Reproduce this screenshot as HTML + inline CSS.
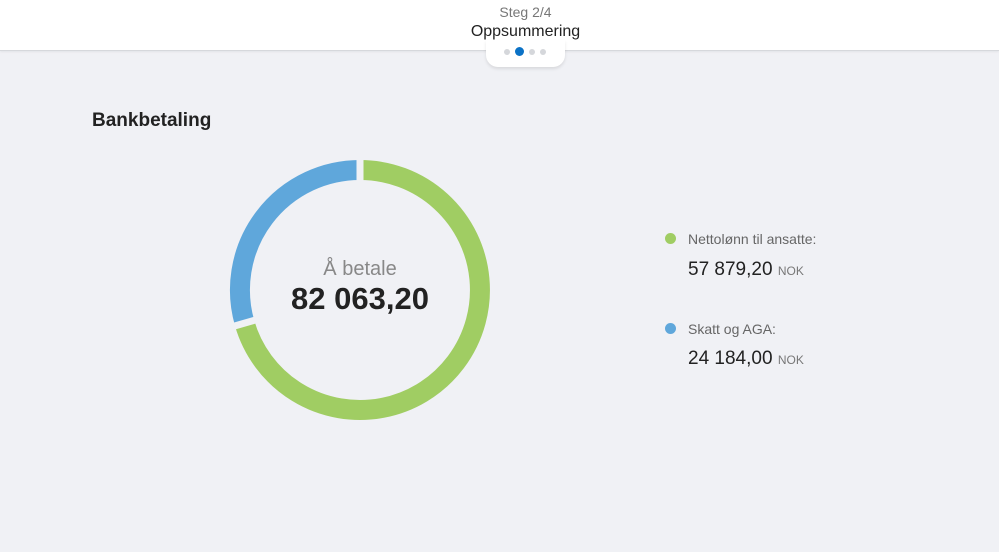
<!DOCTYPE html>
<html><head><meta charset="utf-8"><style>
body{margin:0;width:999px;height:552px;background:#f0f1f5;font-family:"Liberation Sans",sans-serif;position:relative;overflow:hidden}
.top{position:absolute;left:0;top:0;width:999px;height:50px;background:#fff;border-bottom:1px solid #d6d8dc;box-shadow:0 1px 2px rgba(0,0,0,.06)}
.tab{position:absolute;left:486px;top:40px;width:79px;height:27px;background:#fff;border-radius:0 0 12px 12px;box-shadow:0 2px 3px rgba(0,0,0,.1)}
.dot{position:absolute;top:9px;width:6px;height:6px;border-radius:50%;background:#d5d7db}
.t{position:absolute;white-space:nowrap}
</style></head><body>
<div class="top"></div>
<div class="tab"><div class="dot" style="left:18px"></div><div class="dot" style="left:29px;top:7px;width:9px;height:9px;background:#0b72c6"></div><div class="dot" style="left:43px"></div><div class="dot" style="left:54px"></div></div>
<div class="t" style="left:0;width:1051px;text-align:center;top:4px;font-size:14px;color:#777">Steg 2/4</div>
<div class="t" style="left:0;width:1051px;text-align:center;top:23px;font-size:16px;color:#222">Oppsummering</div>
<div class="t" style="left:92px;top:110px;font-size:19px;font-weight:bold;color:#222">Bankbetaling</div>
<svg style="position:absolute;left:0;top:0" width="999" height="552">
<path d="M360 170 A120 120 0 1 1 244.6 323.1" fill="none" stroke="#a0cd63" stroke-width="20"/>
<path d="M244.6 323.1 A120 120 0 0 1 360 170" fill="none" stroke="#5fa7db" stroke-width="20"/>
<line x1="360" y1="290" x2="360" y2="150" stroke="#f0f1f5" stroke-width="7"/>
<line x1="360" y1="290" x2="225" y2="328.7" stroke="#f0f1f5" stroke-width="7"/>
</svg>
<div class="t" style="left:260px;width:200px;text-align:center;top:258px;font-size:20px;color:#888">Å betale</div>
<div class="t" style="left:240px;width:240px;text-align:center;top:281px;font-size:31px;font-weight:bold;color:#222">82 063,20</div>
<div class="t" style="left:665px;top:233px;width:11px;height:11px;border-radius:50%;background:#a0cd63"></div>
<div class="t" style="left:688px;top:231px;font-size:14px;color:#666">Nettolønn til ansatte:</div>
<div class="t" style="left:688px;top:259px;font-size:19px;color:#222">57 879,20 <span style="font-size:12px;color:#777">NOK</span></div>
<div class="t" style="left:665px;top:323px;width:11px;height:11px;border-radius:50%;background:#5fa7db"></div>
<div class="t" style="left:688px;top:321px;font-size:14px;color:#666">Skatt og AGA:</div>
<div class="t" style="left:688px;top:348px;font-size:19px;color:#222">24 184,00 <span style="font-size:12px;color:#777">NOK</span></div>
</body></html>
